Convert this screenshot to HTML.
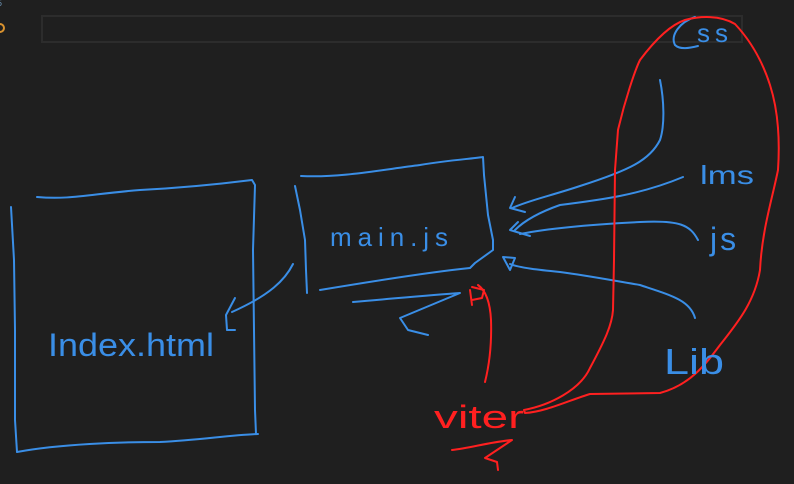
<!DOCTYPE html>
<html><head><meta charset="utf-8"><style>
html,body{margin:0;padding:0;background:#1f1f1f;width:794px;height:484px;overflow:hidden}
svg{display:block}
text{font-family:"Liberation Sans",sans-serif;}
</style></head><body>
<svg width="794" height="484" viewBox="0 0 794 484">
<rect x="0" y="0" width="794" height="484" fill="#1f1f1f"/>
<rect x="42" y="16" width="700" height="26" fill="none" stroke="#2c2c2c" stroke-width="2"/>
<text x="-3" y="6" fill="#6a8fb0" font-size="9">5</text>
<circle cx="0" cy="28" r="4" fill="none" stroke="#d9922e" stroke-width="2"/>
<g fill="none" stroke="#3a8ee6" stroke-width="2" stroke-linecap="round" stroke-linejoin="round">
<path d="M11,207 L14,260 L15,330 L15,420 L17,452"/>
<path d="M37,197 C70,200 90,194 140,190 C180,188 220,184 252,180 L255,185 L253,250 L254,330 L255,410 L256,434"/>
<path d="M17,452 C60,444 120,442 160,442 C200,440 230,435 258,434"/>
<path d="M293,264 C285,280 270,295 232,312"/>
<path d="M235,298 L226,315 L227,330 L235,330"/>
<path d="M295,186 L300,210 L305,240 L306,270 L307,293"/>
<path d="M301,176 C340,178 380,170 420,165 C450,160 470,159 483,157 L484,175 L488,215 L493,240 L493,250 L475,263 L470,268 C430,272 380,280 320,290"/>
<path d="M353,302 C400,298 430,295 460,293 L400,318 L408,330 L428,335"/>
<path d="M660,80 C664,100 665,125 660,140 C650,160 630,170 580,186 C550,196 530,200 512,208"/>
<path d="M515,197 L510,208 L525,212"/>
<path d="M683,177 C640,195 600,200 560,205 C540,212 525,220 515,230"/>
<path d="M518,222 L510,230 L530,236"/>
<path d="M698,240 C690,225 680,220 640,222 C600,224 550,228 520,234"/>
<path d="M695,318 C690,300 670,295 640,285 C610,280 590,276 560,272 C540,270 520,268 510,264"/>
<path d="M503,257 L515,258 L510,270 Z"/>
<path d="M695,17 C680,22 670,35 675,45 C680,50 690,48 698,46"/>
</g>
<g fill="none" stroke="#ff2020" stroke-width="2" stroke-linecap="round" stroke-linejoin="round">
<path d="M524,410 C550,405 580,390 590,368 C605,340 612,325 613,310 L614,260 L615,170 L618,130 C625,100 635,70 640,60 C655,40 670,25 685,20 C700,16 720,15 735,24 C750,40 762,60 770,85 C778,110 780,140 778,170 C772,200 762,230 760,270 C755,300 740,320 720,345 C705,365 690,385 660,393 L590,394 C570,400 545,412 525,413 Z"/>
<path d="M485,382 C488,370 492,350 491,320 C490,300 485,290 478,285"/>
<path d="M470,290 L472,305 M472,287 L484,290 L482,298 L472,300"/>
<path d="M452,450 C470,448 490,442 512,440 L485,458 L497,462 L498,470"/>
</g>
<g fill="#3a8ee6">
<text x="48" y="356" font-size="32" textLength="166" lengthAdjust="spacingAndGlyphs">Index.html</text>
<text x="330" y="246" font-size="26" textLength="118" lengthAdjust="spacing">main.js</text>
<text x="697" y="42" font-size="26" letter-spacing="5">ss</text>
<text x="700" y="184" font-size="26" textLength="54" lengthAdjust="spacingAndGlyphs">lms</text>
<text x="710" y="250" font-size="32" letter-spacing="3">js</text>
<text x="664" y="374" font-size="36" textLength="60" lengthAdjust="spacingAndGlyphs">Lib</text>
</g>
<text x="434" y="428" fill="#ff2020" font-size="32" textLength="90" lengthAdjust="spacingAndGlyphs">viter</text>
</svg>
</body></html>
